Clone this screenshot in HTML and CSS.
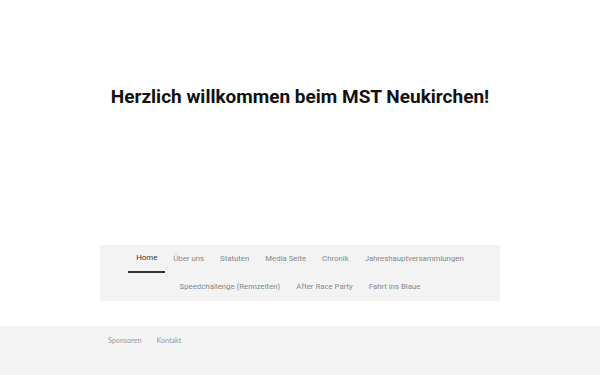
FILE: index.html
```html
<!DOCTYPE html>
<html lang="de">
<head>
    <meta charset="UTF-8">
    <meta name="viewport" content="width=device-width, initial-scale=1.0">
    <title>MST Neukirchen</title>
    <link rel="stylesheet" href="styles.css">
</head>
<body>
    <header class="hero">
        <h1>Herzlich willkommen beim MST Neukirchen!</h1>
    </header>
    <div class="container">
        <nav class="main-nav">
            <a href="#" class="active">Home</a>
            <a href="#">Über uns</a>
            <a href="#">Statuten</a>
            <a href="#">Media Seite</a>
            <a href="#">Chronik</a>
            <a href="#">Jahreshauptversammlungen</a>
            <a href="#">Speedchallenge (Rennzeiten)</a>
            <a href="#">After Race Party</a>
            <a href="#">Fahrt ins Blaue</a>
        </nav>
    </div>
    <footer class="footer">
        <div class="footer-links">
            <a href="#">Sponsoren</a>
            <a href="#">Kontakt</a>
        </div>
    </footer>
</body>
</html>
```

FILE: styles.css
```css
body {
    margin: 0;
    font-family: Roboto, Arial, sans-serif;
    background-color: #fff;
    color: #111;
}
.hero {
    height: 245px;
    display: flex;
    justify-content: center;
    padding-top: 84px;
    box-sizing: border-box;
}
.hero h1 {
    margin: 0;
    font-size: 19px;
    font-weight: 700;
    line-height: 26px;
}
.container {
    width: 400px;
    margin: 0 auto;
}
.main-nav {
    display: flex;
    flex-wrap: wrap;
    justify-content: center;
    background-color: #f3f3f3;
}
.main-nav a {
    padding: 0 8px;
    height: 28px;
    line-height: 28px;
    font-size: 7.8px;
    color: #888;
    text-decoration: none;
    box-sizing: border-box;
}
.main-nav a.active {
    color: #333;
    border-bottom: 2px solid #333;
    line-height: 26px;
}
.footer {
    margin-top: 25px;
    background-color: #f4f4f4;
    height: 60px;
}
.footer-links {
    width: 400px;
    margin: 0 auto;
    padding: 10px 0 0 8px;
    box-sizing: border-box;
    display: flex;
    gap: 15px;
}
.footer-links a {
    font-family: Lato, "Noto Sans", sans-serif;
    font-size: 7.2px;
    color: #999;
    text-decoration: none;
}
```
